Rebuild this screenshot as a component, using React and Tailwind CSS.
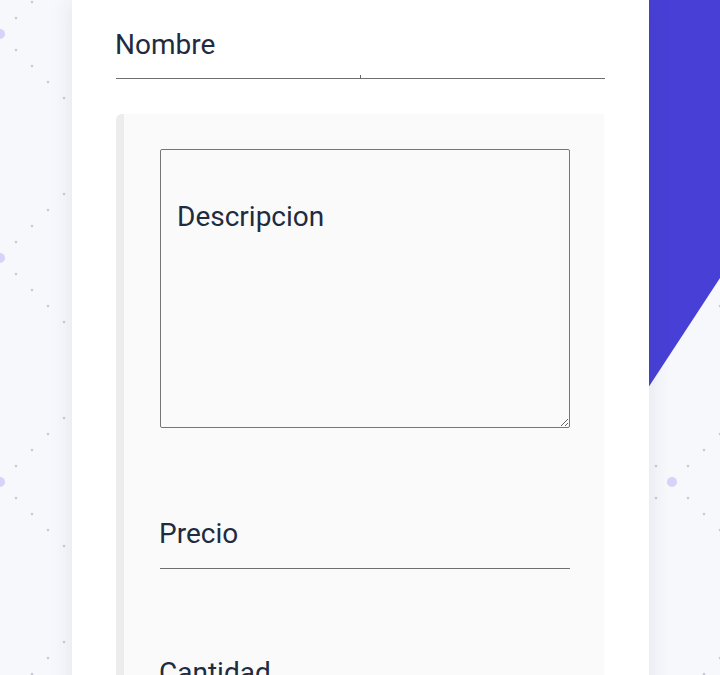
import React from "react";

const diag = [];
for (let k = 1; k <= 13; k++) {
  if (k === 7) continue;
  diag.push([16 * k, 16 * k]);
  diag.push([224 - 16 * k, 16 * k]);
}

function Background() {
  return (
    <svg className="absolute inset-0 h-full w-full" width="720" height="675" aria-hidden="true">
      <defs>
        <pattern id="dots" x="0" y="34" width="224" height="224" patternUnits="userSpaceOnUse">
          {diag.map(([x, y], i) => (
            <circle key={i} cx={x} cy={y} r="1.3" fill="#c9cad6" />
          ))}
          {[
            [0, 0],
            [224, 0],
            [0, 224],
            [224, 224],
            [112, 112],
          ].map(([x, y], i) => (
            <circle key={"p" + i} cx={x} cy={y} r="5" fill="#d5d3f7" />
          ))}
        </pattern>
      </defs>
      <rect x="0" y="0" width="720" height="675" fill="url(#dots)" />
      <polygon points="600,0 720,0 720,278 648,388 600,461" fill="#4840d6" />
    </svg>
  );
}

const label = "text-[28px] leading-[32px] text-[#1f2b40] -ml-px";

export default function App() {
  return (
    <div
      className="relative h-[675px] w-[720px] overflow-hidden bg-[#f7f8fc]"
      style={{ fontFamily: "Roboto, 'Noto Sans', sans-serif" }}
    >
      <Background />
      <div className="relative z-10 ml-[72px] min-h-[675px] w-[577px] bg-white px-[44px] pt-[29px] shadow-[0_0_22px_rgba(40,48,90,0.10)]">
        <div className="relative border-b border-[#6f6f6f] pb-[17px]">
          <div className={label}>Nombre</div>
          <span className="absolute bottom-0 left-[244px] h-[3px] w-px bg-[#666]" />
        </div>

        <div className="mr-px mt-[35px] rounded-tl-[6px] border-l-[8px] border-[#ececec] bg-[#fafafa] pb-10 pl-[36px] pr-[34px] pt-[35px]">
          <textarea
            className="block h-[279px] w-full resize-y rounded-[2px] border border-[#767676] bg-transparent pl-[16px] pt-[51px] text-[28px] leading-[32px] text-[#1f2b40] outline-none"
            defaultValue="Descripcion"
          />
          <div className="mt-[90px] border-b border-[#6f6f6f] pb-[18px]">
            <div className={label}>Precio</div>
          </div>
          <div className="mt-[88px]">
            <div className={label}>Cantidad</div>
          </div>
        </div>
      </div>
    </div>
  );
}
